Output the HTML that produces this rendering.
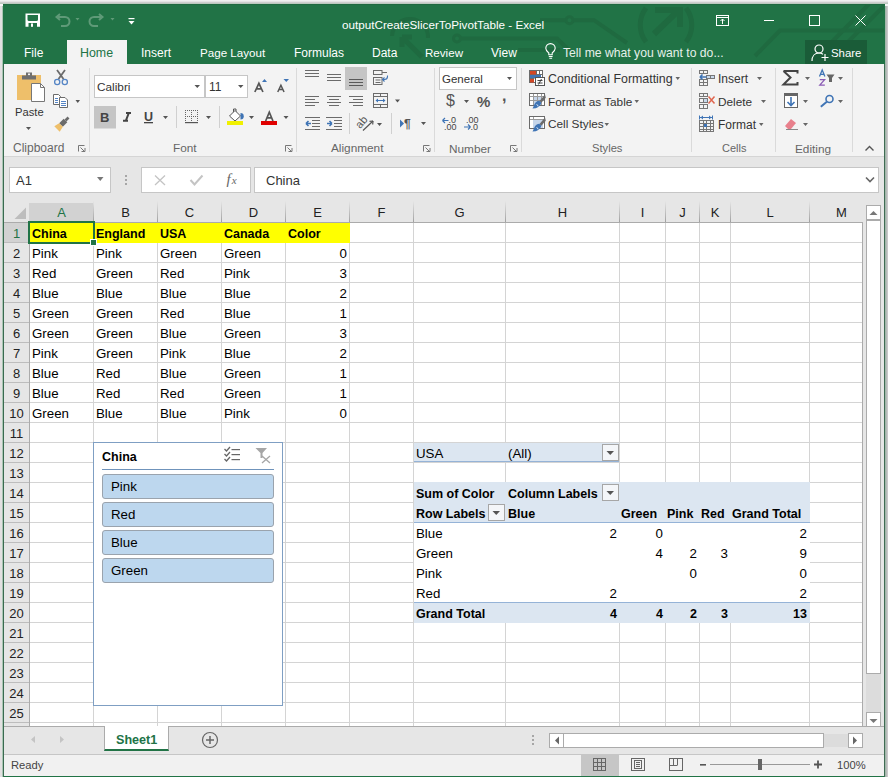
<!DOCTYPE html>
<html><head><meta charset="utf-8">
<style>
*{box-sizing:border-box;margin:0;padding:0}
html,body{width:888px;height:777px;overflow:hidden;background:#f6f6f6;font-family:"Liberation Sans",sans-serif;}
.a{position:absolute;white-space:nowrap}
#win{position:absolute;left:3px;top:4px;width:882px;height:773px;background:#217346;}
.tt{color:#fff;font-size:12px;}
.tab{color:#fff;font-size:12px;top:46px}
.rb{color:#444;font-size:12px}
.gl{color:#666;font-size:12px;top:142px}
.cell{font-size:13.3px;color:#000;position:absolute;white-space:nowrap;height:20px;line-height:20px;margin-top:1px}
.b{font-weight:bold;font-size:12.5px}
.num{text-align:right}
.ch{top:205px;height:16px;text-align:center;font-size:13px;line-height:16px}
.rh{left:4px;width:25px;height:19px;text-align:center;font-size:13px;line-height:19px;margin-top:1px}
</style></head><body>
<div id="win"></div>
<div class="a" style="left:0;top:0;width:888px;height:1px;background:#f0f0f0"></div>
<div class="a" style="left:0;top:1px;width:888px;height:1px;background:#e4e4e4"></div>
<div class="a" style="left:0;top:2px;width:888px;height:1px;background:#cecece"></div>
<div class="a" style="left:0;top:3px;width:888px;height:1px;background:#bccabf"></div>
<div class="a" style="left:3px;top:4px;width:882px;height:1px;background:#1f6940"></div>
<div class="a" style="left:885px;top:6px;width:1px;height:771px;background:#a3b8ab"></div>
<div class="a" style="left:886px;top:6px;width:1px;height:771px;background:#b6bcb9"></div>
<div class="a" style="left:887px;top:6px;width:1px;height:771px;background:#cbc8cb"></div>
<div class="a" style="left:3px;top:64px;width:1px;height:713px;background:#3a6a50"></div>
<div class="a" style="left:2px;top:6px;width:1px;height:771px;background:#aac6b4"></div>
<div class="a" style="left:0px;top:6px;width:2px;height:771px;background:#e2e0e1"></div>
<div class="a" style="left:884px;top:64px;width:1px;height:713px;background:#3f6b53"></div>
<!-- title bar pattern -->
<svg class="a" style="left:4px;top:4px" width="880" height="60">
 <g transform="translate(-4,-4)" stroke="#1f6a40" stroke-width="4" fill="none">
  <path d="M392 36 A18 18 0 0 1 428 38"/>
  <path d="M402 37 L422 57 M402 37 H412 M402 37 V47" stroke-width="5"/>
  <circle cx="457" cy="38.5" r="3.5" stroke-width="3"/>
  <path d="M461 38.5 H557 L571 52"/>
  <path d="M518 50 H560"/>
  <circle cx="569.5" cy="20.2" r="3.5" stroke-width="3"/>
  <path d="M540 20.2 H565.5 M573.5 20.2 H594 L627 43"/>
  <path d="M646 8 A28 28 0 0 0 646 42" stroke-width="5"/>
  <path d="M686 8 A28 28 0 0 1 686 42" stroke-width="5"/>
  <path d="M654 34 L679 10 M655 10 H680 V27" stroke-width="6"/>
  <path d="M755 56 L780 30.5 H884"/>
  <path d="M826 48 L869 4 M842 48 L884 6"/>
 </g>
</svg>
<div class="a tt" style="left:342px;top:18px;font-size:11.7px">outputCreateSlicerToPivotTable - Excel</div>
<!-- QAT -->
<svg class="a" style="left:0;top:0" width="140" height="34">
 <g fill="#fff">
  <path d="M25.5 13.5 h14.5 v13.3 h-14.5z M27.5 15 h10.5 v4.5 a1.5 1.5 0 0 1 -1.5 1.5 h-7.5 a1.5 1.5 0 0 1 -1.5 -1.5z M28.5 23 h8.5 v3.8 h-8.5z" fill-rule="evenodd"/><rect x="31" y="23.5" width="2" height="3.3"/>
 </g>
 <g stroke="#5f9a78" stroke-width="2" fill="none">
  <path d="M57 17 h8 a4.5 4.5 0 0 1 0 9 h-4"/>
  <path d="M60 14 l-3.5 3 l3.5 3"/>
  <path d="M102 17 h-8 a4.5 4.5 0 0 0 0 9 h4"/>
  <path d="M99 14 l3.5 3 l-3.5 3"/>
 </g>
 <g fill="#5f9a78"><path d="M75.5 18 h4 l-2 2.5z M110.5 18 h4 l-2 2.5z"/></g>
 <g fill="#fff"><rect x="128.5" y="18" width="6" height="1.2"/><path d="M128.5 21 h6 l-3 3.5z"/></g>
</svg>
<!-- window controls -->
<svg class="a" style="left:700px;top:0" width="188" height="34">
 <g stroke="#fff" stroke-width="1" fill="none">
  <rect x="16.5" y="15.5" width="12" height="10"/>
  <path d="M16.5 17.5 h12"/>
  <path d="M22.5 24 v-5 M20.5 21 l2 -2 l2 2"/>
  <path d="M64 20.5 h10"/>
  <rect x="109.5" y="15.5" width="10" height="10"/>
  <path d="M155.5 15.5 l10 10 M165.5 15.5 l-10 10"/>
 </g>
</svg>
<!-- tabs -->
<div class="a" style="left:67px;top:40px;width:60px;height:24px;background:#f3f3f3"></div>
<div class="a tab" style="left:24px">File</div>
<div class="a tab" style="left:80px;color:#217346;font-size:12.4px">Home</div>
<div class="a tab" style="left:141px">Insert</div>
<div class="a tab" style="left:200px;font-size:11.6px">Page Layout</div>
<div class="a tab" style="left:294px">Formulas</div>
<div class="a tab" style="left:372px">Data</div>
<div class="a tab" style="left:425px;font-size:11.6px">Review</div>
<div class="a tab" style="left:491px">View</div>
<svg class="a" style="left:540px;top:38px" width="22" height="24">
 <g stroke="#fff" stroke-width="1.1" fill="none">
  <path d="M8.8 16.8 v-1.8 c-2 -1.5 -3 -3 -3 -4.7 a4.7 4.7 0 0 1 9.4 0 c0 1.7 -1 3.2 -3 4.7 v1.8z"/>
  <path d="M8.8 18.5 h3.8 M9.3 20.3 h2.8"/>
 </g>
</svg>
<div class="a tab" style="left:563px;color:#e6f0ea;font-size:12.2px">Tell me what you want to do...</div>
<div class="a" style="left:805px;top:40px;width:62px;height:24px;background:#1a5c38"></div>
<svg class="a" style="left:808px;top:40px" width="24" height="24">
 <g stroke="#fff" stroke-width="1.2" fill="none">
  <circle cx="11" cy="9" r="4"/>
  <path d="M4 21 c0 -5 3 -8 7 -8 c2 0 3 0.5 4 1.2"/>
  <path d="M17 14 v7 M13.5 17.5 h7"/>
 </g>
</svg>
<div class="a tab" style="left:831px;font-size:11.4px;top:47px">Share</div>
<!-- ribbon -->
<div class="a" style="left:4px;top:64px;width:880px;height:93px;background:#f3f3f3;border-bottom:1px solid #d5d5d5"></div>
<!-- formula bar zone -->
<div class="a" style="left:4px;top:157px;width:880px;height:569px;background:#e6e6e6"></div>

<!-- ===== Clipboard group ===== -->
<svg class="a" style="left:0;top:64px" width="300" height="93">
 <g transform="translate(0,-64)">
  <!-- paste -->
  <rect x="17" y="75" width="24" height="25" fill="#eebf6a"/>
  <path d="M22 79.5 v-4 h4 v-3 h6 v3 h4 v4z" fill="#6f6f6f"/>
  <rect x="28" y="73.5" width="2" height="1.6" fill="#f3f3f3"/>
  <path d="M31.5 83.5 h9 l4 4 v14 h-13z" fill="#fff" stroke="#777" stroke-width="1"/>
  <path d="M40.5 83.5 v4 h4" fill="none" stroke="#777" stroke-width="1"/>
  <path d="M26 127 h5 l-2.5 3z" fill="#555"/>
  <!-- cut -->
  <path d="M57 70 L63.5 79 M65 70 L58.5 79" stroke="#6b6b6b" stroke-width="1.8" fill="none"/>
  <circle cx="57.2" cy="82" r="2.6" fill="none" stroke="#5585c5" stroke-width="1.3"/>
  <circle cx="64.8" cy="82" r="2.6" fill="none" stroke="#5585c5" stroke-width="1.3"/>
  <!-- copy -->
  <path d="M53.5 94.5 h5 l2 2 v8 h-7z" fill="#fff" stroke="#6b6b6b"/>
  <path d="M59.5 97.5 h5.5 l2.5 2.5 v7.5 h-8z" fill="#fff" stroke="#6b6b6b"/>
  <path d="M55 98.5 h3 M55 100.5 h3 M55 102.5 h3" stroke="#5585c5"/>
  <path d="M61 101.5 h5 M61 103.5 h5 M61 105.5 h5" stroke="#5585c5"/>
  <path d="M75.5 100 h4.5 l-2.25 3z" fill="#555"/>
  <!-- format painter -->
  <path d="M69.42 118.42 L67.58 116.58 L64.58 119.58 L66.42 121.42z" fill="#6b6b6b"/>
  <path d="M67.34 122.34 L63.66 118.66 L59.16 123.16 L62.84 126.84z" fill="#6b6b6b"/>
  <path d="M62.84 126.84 L59.16 123.16 L54.31 126.31 L59.69 131.69z" fill="#eebf6a"/>
  <!-- launcher -->
  <path d="M78.5 151.5 v-6 h6" fill="none" stroke="#777"/>
  <path d="M80.5 147.5 l4 4 M81.5 151.5 h3.5 v-3.5" fill="none" stroke="#777"/>
  <line x1="89.5" y1="68" x2="89.5" y2="152" stroke="#dadada"/>
  <!-- font boxes -->
  <rect x="94.5" y="75.5" width="110" height="22" fill="#fff" stroke="#c6c6c6"/>
  <rect x="205.5" y="75.5" width="42" height="22" fill="#fff" stroke="#c6c6c6"/>
  <path d="M194.5 85 h5.5 l-2.75 3z M238 85 h5.5 l-2.75 3z" fill="#555"/>
  <!-- grow/shrink -->
  <path d="M262 82 l2.5 -3 l2.5 3z M283.5 79 h5.5 l-2.75 3z" fill="#3f74b5"/>
  <!-- bold pressed -->
  <rect x="94" y="106" width="22" height="22.5" fill="#c5c5c5"/>
  <path d="M163 116 h5 l-2.5 3z M206 116 h5 l-2.5 3z M249 116 h5 l-2.5 3z M283.5 116 h5 l-2.5 3z" fill="#555"/>
  <line x1="176.5" y1="106" x2="176.5" y2="128" stroke="#d0d0d0"/>
  <line x1="219.5" y1="106" x2="219.5" y2="128" stroke="#d0d0d0"/>
  <!-- underline -->
  <rect x="144" y="122" width="9" height="1.3" fill="#444"/>
  <!-- borders icon -->
  <g fill="#666"><rect x="185" y="110" width="1" height="1"/><rect x="185" y="116" width="1" height="1"/><rect x="187" y="110" width="1" height="1"/><rect x="187" y="116" width="1" height="1"/><rect x="189" y="110" width="1" height="1"/><rect x="189" y="116" width="1" height="1"/><rect x="191" y="110" width="1" height="1"/><rect x="191" y="116" width="1" height="1"/><rect x="193" y="110" width="1" height="1"/><rect x="193" y="116" width="1" height="1"/><rect x="195" y="110" width="1" height="1"/><rect x="195" y="116" width="1" height="1"/><rect x="197" y="110" width="1" height="1"/><rect x="197" y="116" width="1" height="1"/><rect x="185" y="110" width="1" height="1"/><rect x="191" y="110" width="1" height="1"/><rect x="197" y="110" width="1" height="1"/><rect x="185" y="112" width="1" height="1"/><rect x="191" y="112" width="1" height="1"/><rect x="197" y="112" width="1" height="1"/><rect x="185" y="114" width="1" height="1"/><rect x="191" y="114" width="1" height="1"/><rect x="197" y="114" width="1" height="1"/><rect x="185" y="116" width="1" height="1"/><rect x="191" y="116" width="1" height="1"/><rect x="197" y="116" width="1" height="1"/><rect x="185" y="118" width="1" height="1"/><rect x="191" y="118" width="1" height="1"/><rect x="197" y="118" width="1" height="1"/><rect x="185" y="120" width="1" height="1"/><rect x="191" y="120" width="1" height="1"/><rect x="197" y="120" width="1" height="1"/></g>
  <rect x="185" y="122" width="13" height="1.2" fill="#555"/>
  <!-- fill colour -->
  <path d="M233.5 114 v-5 h2.5 v5" fill="none" stroke="#555"/><path d="M229.5 116 l5.5 -5.5 l5.5 5.5 l-5.5 5z" fill="#fff" stroke="#555"/>
  
  <path d="M240.5 113 a3 3 0 0 1 0 6.5z" fill="#3f74b5"/>
  <rect x="227" y="121" width="16" height="4" fill="#f0f000"/>
  <!-- font colour -->
  <rect x="261" y="121" width="16" height="4" fill="#e00000"/>
  <!-- launcher -->
  <path d="M285.5 151.5 v-6 h6" fill="none" stroke="#777"/>
  <path d="M287.5 147.5 l4 4 M288.5 151.5 h3.5 v-3.5" fill="none" stroke="#777"/>
  <line x1="296.5" y1="68" x2="296.5" y2="152" stroke="#dadada"/>
 </g>
</svg>
<div class="a rb" style="left:15px;top:106px;font-size:11.2px;color:#333">Paste</div>
<div class="a rb" style="left:13px;top:141px;font-size:12px;color:#666">Clipboard</div>
<div class="a rb" style="left:97px;top:80px;font-size:11.8px;color:#333">Calibri</div>
<div class="a rb" style="left:209px;top:80px;font-size:12px;color:#333">11</div>


<div class="a rb" style="left:100px;top:110px;font-size:13px;color:#444;font-weight:bold">B</div>
<svg class="a" style="left:120px;top:108px" width="14" height="18"><path d="M6 5 h5 M3 12.8 h5 M8.8 5 l-3 7.8" fill="none" stroke="#444" stroke-width="2"/></svg>
<div class="a rb" style="left:144px;top:110px;font-size:12.5px;color:#444;font-weight:bold">U</div>

<div class="a rb" style="left:173px;top:141px;font-size:11.8px;color:#666">Font</div>
<svg class="a" style="left:0;top:0" width="300" height="160"><path d="M254.85 92 L258.9 83.35 L262.95 92 M256.646 88.96000000000001 H261.154" fill="none" stroke="#555" stroke-width="1.7"/><path d="M277.75 92 L280.9 85.25 L284.05 92 M279.106 89.6 H282.694" fill="none" stroke="#555" stroke-width="1.5"/><path d="M265.65000000000003 121 L269.3 112.14999999999999 L272.95 121 M267.23 117.896 H271.37" fill="none" stroke="#555" stroke-width="1.7"/></svg>

<!-- ===== Alignment / Number / Styles / Cells / Editing ===== -->
<svg class="a" style="left:296px;top:64px" width="592" height="93">
 <g transform="translate(-296,-64)">
  <g fill="#6b6b6b">
   <rect x="305" y="70" width="14" height="1"/><rect x="305" y="73" width="14" height="1"/><rect x="305" y="76" width="14" height="1"/>
   <rect x="327" y="74" width="14" height="1"/><rect x="327" y="77" width="14" height="1"/><rect x="327" y="80" width="14" height="1"/>
  </g>
  <rect x="345" y="67" width="22" height="23" fill="#c5c5c5"/>
  <g fill="#5a5a5a">
   <rect x="349" y="79" width="14" height="1"/><rect x="349" y="82" width="14" height="1"/><rect x="349" y="85" width="14" height="1"/>
  </g>
  <g fill="none" stroke="#6b6b6b">
   <rect x="373.5" y="70.5" width="8.5" height="4"/><path d="M382 72.5 h5"/>
   <rect x="373.5" y="77.5" width="8.5" height="7"/><path d="M375.5 80 h5 M375.5 82.5 h5"/>
  </g>
  <path d="M387.5 75.5 v1 a3 3 0 0 1 -3 3 h-2 M384.5 77.5 l-2 2 l2 2" fill="none" stroke="#3f74b5" stroke-width="1.1"/>
  <g fill="#6b6b6b">
   <rect x="305" y="96" width="14" height="1"/><rect x="305" y="99" width="10" height="1"/><rect x="305" y="102" width="14" height="1"/><rect x="305" y="105" width="10" height="1"/>
   <rect x="327" y="96" width="14" height="1"/><rect x="329" y="99" width="10" height="1"/><rect x="327" y="102" width="14" height="1"/><rect x="329" y="105" width="10" height="1"/>
   <rect x="349" y="96" width="14" height="1"/><rect x="353" y="99" width="10" height="1"/><rect x="349" y="102" width="14" height="1"/><rect x="353" y="105" width="10" height="1"/>
  </g>
  <g fill="none" stroke="#6b6b6b">
   <rect x="373.5" y="93.5" width="14" height="14"/>
   <path d="M373.5 96.5 h14 M373.5 104.5 h14 M380.5 93.5 v3 M380.5 104.5 v3"/>
  </g>
  <path d="M376 100.5 h9" stroke="#3f74b5"/>
  <path d="M375.5 100.5 l2.5 -2 v4z M385.5 100.5 l-2.5 -2 v4z" fill="#3f74b5"/>
  <path d="M395 99.5 h5 l-2.5 3z M377 123 h5 l-2.5 3z M421 122 h5 l-2.5 3z" fill="#555"/>
  <g fill="#6b6b6b">
   <rect x="305" y="117" width="15" height="1"/><rect x="312" y="120" width="8" height="1"/><rect x="312" y="123" width="8" height="1"/><rect x="312" y="126" width="8" height="1"/><rect x="305" y="129" width="15" height="1"/>
   <rect x="326" y="117" width="16" height="1"/><rect x="334" y="120" width="8" height="1"/><rect x="334" y="123" width="8" height="1"/><rect x="334" y="126" width="8" height="1"/><rect x="326" y="129" width="16" height="1"/>
  </g>
  <path d="M306 123.5 h5 M306 123.5 l2.5 -2.5 M306 123.5 l2.5 2.5" fill="none" stroke="#3f74b5" stroke-width="1.6"/>
  <path d="M327 123.5 h5 M332 123.5 l-2.5 -2.5 M332 123.5 l-2.5 2.5" fill="none" stroke="#3f74b5" stroke-width="1.6"/>
<line x1="349.5" y1="113" x2="349.5" y2="134" stroke="#d0d0d0"/>
  <!-- orientation -->
  <path d="M363 130.5 l10 -9.5" stroke="#555" stroke-width="1.2"/>
  <path d="M373 121 l-3.5 0.3 M373 121 l-0.3 3.5" stroke="#555" stroke-width="1.2"/>
  <line x1="391.5" y1="113" x2="391.5" y2="134" stroke="#d0d0d0"/>
  <!-- rtl -->
  <path d="M400 119.5 l4 4 l-4 4z" fill="#3f74b5"/>
  <!-- launchers & separators -->
  <path d="M423.5 151.5 v-6 h6 M425.5 147.5 l4 4 M426.5 151.5 h3.5 v-3.5" fill="none" stroke="#777"/>
  <line x1="434.5" y1="68" x2="434.5" y2="152" stroke="#dadada"/>
  <!-- number -->
  <rect x="439.5" y="67.5" width="77" height="22" fill="#fff" stroke="#c6c6c6"/>
  <path d="M507 77 h5 l-2.5 3z M464 100 h5 l-2.5 3z" fill="#555"/>
  <path d="M442.5 120.5 h6 M442.5 120.5 l2.5 -2.5 M442.5 120.5 l2.5 2.5" fill="none" stroke="#3f74b5" stroke-width="1.2"/>
  <path d="M464 127 h6.5 M470.5 127 l-2.5 -2.5 M470.5 127 l-2.5 2.5" fill="none" stroke="#3f74b5" stroke-width="1.2"/>
  <path d="M510.5 151.5 v-6 h6 M512.5 147.5 l4 4 M513.5 151.5 h3.5 v-3.5" fill="none" stroke="#777"/>
  <line x1="521.5" y1="68" x2="521.5" y2="152" stroke="#dadada"/>
  <!-- styles icons -->
  <g>
   <rect x="529.5" y="70.5" width="13" height="12" fill="#fff" stroke="#6b6b6b"/>
   <path d="M536.5 70.5 v4.5 M539.5 70.5 v4.5 M529.5 74.5 h13 M529.5 78.5 h5" stroke="#6b6b6b" fill="none"/>
   <rect x="530" y="71" width="6" height="3.5" fill="#d24726"/>
   <rect x="530" y="75" width="11" height="3" fill="#3f74b5"/>
   <rect x="530" y="79" width="4" height="3.5" fill="#d24726"/>
   <rect x="535.5" y="77.5" width="9" height="8" fill="#fff" stroke="#555"/>
   <path d="M537.5 80.5 h5 M537.5 83 h5 M541.5 79 l-3 5.5" stroke="#333" stroke-width="0.9"/>
  </g>
  <g>
   <rect x="529.5" y="93.5" width="15" height="12" fill="#fff" stroke="#6b6b6b"/>
   <rect x="533" y="97" width="9" height="8" fill="#c5d5ea"/>
   <path d="M533.5 93.5 v12 M537.5 93.5 v12 M541.5 93.5 v12 M529.5 96.5 h15 M529.5 100.5 h15" stroke="#9a9a9a" fill="none"/>
   <rect x="529.5" y="93.5" width="15" height="12" fill="none" stroke="#6b6b6b"/>
   <path d="M545 94.5 l-5.5 6.5 l1.8 1.8 l4.5 -5z" fill="#6b6b6b"/>
   <path d="M539.3 100.8 l2 2 c-0.5 2.5 -2.5 4.5 -5.5 5.5 l-3.3 0.2 c1 -1.5 1.5 -3.8 2.5 -5.2 c1 -1.5 2.5 -2.3 4.3 -2.5z" fill="#3f74b5"/>
   <path d="M536.5 104.5 q1.5 0.3 1.5 1.8" fill="none" stroke="#fff" stroke-width="0.8"/>
  </g>
  <g>
   <rect x="529.5" y="116.5" width="15" height="12" fill="#fff" stroke="#6b6b6b"/>
   <rect x="533" y="120" width="10" height="8" fill="#c5d5ea"/>
   <path d="M529.5 119.5 h15 M533.5 116.5 v3" stroke="#9a9a9a" fill="none"/>
   <rect x="529.5" y="116.5" width="15" height="12" fill="none" stroke="#6b6b6b"/>
   <path d="M545 117.5 l-5.5 6.5 l1.8 1.8 l4.5 -5z" fill="#6b6b6b"/>
   <path d="M539.3 123.8 l2 2 c-0.5 2.5 -2.5 4.5 -5.5 5.5 l-3.3 0.2 c1 -1.5 1.5 -3.8 2.5 -5.2 c1 -1.5 2.5 -2.3 4.3 -2.5z" fill="#3f74b5"/>
   <path d="M536.5 127.5 q1.5 0.3 1.5 1.8" fill="none" stroke="#fff" stroke-width="0.8"/>
  </g>
  <path d="M675.5 77 h4.5 l-2.25 3z M634.5 100 h4.5 l-2.25 3z M604.5 123 h4.5 l-2.25 3z" fill="#666"/>
  <line x1="691.5" y1="68" x2="691.5" y2="152" stroke="#dadada"/>
  <!-- cells icons -->
  <g fill="none" stroke="#777">
   <rect x="699.5" y="70.5" width="8" height="3"/><path d="M703.5 70.5 v3"/>
   <rect x="699.5" y="79.5" width="8" height="6"/><path d="M703.5 79.5 v6 M699.5 82.5 h8"/>
   <rect x="706.5" y="75.5" width="8" height="3" fill="#c9d9ec"/><path d="M710.5 75.5 v3"/>
   <rect x="699.5" y="93.5" width="8" height="3"/><path d="M703.5 93.5 v3"/>
   <rect x="699.5" y="98.5" width="8" height="4"/><path d="M703.5 98.5 v4"/>
   <rect x="699.5" y="104.5" width="8" height="4"/><path d="M703.5 104.5 v4"/>
   <rect x="699.5" y="120.5" width="14" height="11"/>
   <path d="M703.5 120.5 v11 M706.5 120.5 v11 M710.5 120.5 v11 M699.5 123.5 h14 M699.5 126.5 h14 M699.5 129.5 h14"/>
  </g>
  <rect x="704" y="99" width="3" height="3" fill="#c9d9ec"/>
  <path d="M700 77 h6.5 M700 77 l2.5 -2.5 M700 77 l2.5 2.5" fill="none" stroke="#3f74b5" stroke-width="1.6"/>
  <path d="M708.5 96.5 l6 7 M714.5 96.5 l-6 7" stroke="#e0664f" stroke-width="1.5"/>
  <path d="M700 117.5 h12.5 M699.5 115.5 v4 M712.5 115.5 v4" stroke="#3f74b5" fill="none"/>
  <path d="M700.5 117.5 l2.5 -2 v4z M711.5 117.5 l-2.5 -2 v4z" fill="#3f74b5"/>
  <rect x="704" y="124" width="3" height="3" fill="#3f74b5"/>
  <path d="M757 77 h5 l-2.5 3z M761 100 h5 l-2.5 3z M759 123 h4.5 l-2.25 3z" fill="#666"/>
  <line x1="775.5" y1="68" x2="775.5" y2="152" stroke="#dadada"/>
  <!-- editing -->
  <path d="M783.5 71 h14 v2.5 M783.5 71 l7 6.5 l-7 7 h14 v-2.5" fill="none" stroke="#444" stroke-width="2"/>
  <path d="M805 77 h5 l-2.5 3z M838 77 h5 l-2.5 3z M803 100 h5 l-2.5 3z M838 100 h5 l-2.5 3z M803 123 h5 l-2.5 3z" fill="#666"/>
  <rect x="784.5" y="93.5" width="13" height="14" fill="#fff" stroke="#666"/>
  <rect x="784" y="93" width="14" height="3" fill="#666"/>
  <path d="M791 97 v8 M787.5 102 l3.5 3.5 l3.5 -3.5" fill="none" stroke="#3f74b5" stroke-width="1.6"/>
  <path d="M826.5 74.5 h8 l-2.5 3.5 v4 h-3 v-4z" fill="#666"/>
  <circle cx="829.5" cy="99" r="3.5" fill="none" stroke="#3f74b5" stroke-width="1.6"/>
  <path d="M826.8 101.8 l-6 5" stroke="#3f74b5" stroke-width="2"/>
  <path d="M785 126 l6 -7 l5 4 l-5 6 h-3z" fill="#e8808c"/>
  <path d="M786 129.5 h12" stroke="#888"/>
  <path d="M865.5 150.5 l4 -4 l4 4" fill="none" stroke="#555" stroke-width="1.4"/>
  <line x1="852.5" y1="68" x2="852.5" y2="152" stroke="#dadada"/>
 </g>
</svg>
<div class="a rb" style="left:355px;top:116px;font-size:11px;color:#555;transform:rotate(-50deg);transform-origin:50% 50%">ab</div>
<div class="a rb" style="left:404px;top:117px;font-size:12px;color:#555;font-weight:bold">&para;</div>
<div class="a rb" style="left:331px;top:141px;font-size:11.8px;color:#666">Alignment</div>
<div class="a rb" style="left:442px;top:73px;font-size:11.5px;color:#333">General</div>
<div class="a rb" style="left:446px;top:92px;font-size:16px;color:#555">$</div>
<div class="a rb" style="left:477px;top:93px;font-size:15px;color:#555;font-weight:bold">%</div>
<div class="a rb" style="left:502px;top:87px;font-size:16px;color:#555;font-weight:bold">,</div>


<div class="a rb" style="left:449px;top:142px;font-size:11.8px;color:#666">Number</div>
<svg class="a" style="left:0;top:0" width="520" height="140"><g font-family="Liberation Sans" font-size="9px" fill="#444">
<text x="448.5" y="122.5">.0</text><text x="444" y="129.5">.00</text>
<text x="466" y="122.5">.00</text><text x="470.5" y="129.5">.0</text></g></svg>
<div class="a rb" style="left:548px;top:72px;font-size:12.4px;color:#333">Conditional Formatting</div>
<div class="a rb" style="left:548px;top:95px;font-size:11.8px;color:#333">Format as Table</div>
<div class="a rb" style="left:548px;top:117px;font-size:11.8px;color:#333">Cell Styles</div>
<div class="a rb" style="left:592px;top:142px;font-size:11.2px;color:#666">Styles</div>
<div class="a rb" style="left:718px;top:72px;font-size:12px;color:#333">Insert</div>
<div class="a rb" style="left:718px;top:95px;font-size:11.8px;color:#333">Delete</div>
<div class="a rb" style="left:718px;top:118px;font-size:12px;color:#333">Format</div>
<div class="a rb" style="left:722px;top:142px;font-size:11px;color:#666">Cells</div>
<div class="a rb" style="left:795px;top:142px;font-size:11.8px;color:#666">Editing</div>
<svg class="a" style="left:815px;top:66px" width="24" height="22">
 <path d="M4.5 10.5 L7.2 4 L9.9 10.5 M5.6 8.3 H8.8" fill="none" stroke="#3f74b5" stroke-width="1.3"/>
 <path d="M4.8 13.6 H9.6 L4.8 19.2 H9.8" fill="none" stroke="#8a5bb5" stroke-width="1.3"/>
</svg>

<!-- ===== formula bar ===== -->
<div class="a" style="left:9px;top:167px;width:102px;height:26px;background:#fff;border:1px solid #c6c6c6"></div>
<div class="a" style="left:16px;top:173px;font-size:13px;color:#333">A1</div>
<div class="a" style="left:141px;top:167px;width:110px;height:26px;background:#fff;border:1px solid #c6c6c6"></div>
<div class="a" style="left:254px;top:167px;width:625px;height:26px;background:#fff;border:1px solid #c6c6c6"></div>
<div class="a" style="left:266px;top:173px;font-size:13px;color:#333">China</div>
<svg class="a" style="left:0;top:160px" width="888" height="40">
 <g transform="translate(0,-160)">
  <path d="M97 177 h6.5 l-3.25 4z" fill="#777"/>
  <rect x="125" y="175" width="2" height="2" fill="#a6a6a6"/><rect x="125" y="179" width="2" height="2" fill="#a6a6a6"/><rect x="125" y="183" width="2" height="2" fill="#a6a6a6"/>
  <path d="M155 175.5 l10 9.5 M165 175.5 l-10 9.5" stroke="#c4c4c4" stroke-width="1.3"/>
  <path d="M190.5 180 l4 4.5 l8 -9" fill="none" stroke="#c4c4c4" stroke-width="2"/>
  <path d="M866 177.5 l4 4 l4 -4" fill="none" stroke="#666" stroke-width="1.6"/>
 </g>
</svg>
<svg class="a" style="left:220px;top:170px" width="24" height="20"><text x="6.5" y="13.5" font-family="Liberation Serif" font-style="italic" font-size="15px" fill="#666">f</text><text x="11.8" y="13.8" font-family="Liberation Serif" font-style="italic" font-size="11px" fill="#666">x</text></svg>
<!-- ===== headers & grid ===== -->
<div class="a" style="left:30px;top:223px;width:832px;height:503px;background:#fff"></div>
<div class="a" style="left:29px;top:203px;width:64px;height:19px;background:#d2d2d2"></div>
<div class="a" style="left:4px;top:223px;width:25px;height:19px;background:#d2d2d2"></div>
<svg class="a" style="left:0;top:0" width="888" height="777">
 <defs><linearGradient id="sepg" x1="0" y1="0" x2="0" y2="1"><stop offset="0" stop-color="#e6e6e6"/><stop offset="1" stop-color="#a0a0a0"/></linearGradient></defs>
 <path d="M14.5 219 L26 207.5 V219z" fill="#bdbdbd"/>
 <rect x="93" y="201" width="1" height="21" fill="url(#sepg)"/>
<rect x="157" y="201" width="1" height="21" fill="url(#sepg)"/>
<rect x="221" y="201" width="1" height="21" fill="url(#sepg)"/>
<rect x="285" y="201" width="1" height="21" fill="url(#sepg)"/>
<rect x="349" y="201" width="1" height="21" fill="url(#sepg)"/>
<rect x="413" y="201" width="1" height="21" fill="url(#sepg)"/>
<rect x="505" y="201" width="1" height="21" fill="url(#sepg)"/>
<rect x="619" y="201" width="1" height="21" fill="url(#sepg)"/>
<rect x="665" y="201" width="1" height="21" fill="url(#sepg)"/>
<rect x="699" y="201" width="1" height="21" fill="url(#sepg)"/>
<rect x="730" y="201" width="1" height="21" fill="url(#sepg)"/>
<rect x="809" y="201" width="1" height="21" fill="url(#sepg)"/>
<line x1="4" y1="242.5" x2="29" y2="242.5" stroke="#bdbdbd"/>
<line x1="4" y1="262.5" x2="29" y2="262.5" stroke="#bdbdbd"/>
<line x1="4" y1="282.5" x2="29" y2="282.5" stroke="#bdbdbd"/>
<line x1="4" y1="302.5" x2="29" y2="302.5" stroke="#bdbdbd"/>
<line x1="4" y1="322.5" x2="29" y2="322.5" stroke="#bdbdbd"/>
<line x1="4" y1="342.5" x2="29" y2="342.5" stroke="#bdbdbd"/>
<line x1="4" y1="362.5" x2="29" y2="362.5" stroke="#bdbdbd"/>
<line x1="4" y1="382.5" x2="29" y2="382.5" stroke="#bdbdbd"/>
<line x1="4" y1="402.5" x2="29" y2="402.5" stroke="#bdbdbd"/>
<line x1="4" y1="422.5" x2="29" y2="422.5" stroke="#bdbdbd"/>
<line x1="4" y1="442.5" x2="29" y2="442.5" stroke="#bdbdbd"/>
<line x1="4" y1="462.5" x2="29" y2="462.5" stroke="#bdbdbd"/>
<line x1="4" y1="482.5" x2="29" y2="482.5" stroke="#bdbdbd"/>
<line x1="4" y1="502.5" x2="29" y2="502.5" stroke="#bdbdbd"/>
<line x1="4" y1="522.5" x2="29" y2="522.5" stroke="#bdbdbd"/>
<line x1="4" y1="542.5" x2="29" y2="542.5" stroke="#bdbdbd"/>
<line x1="4" y1="562.5" x2="29" y2="562.5" stroke="#bdbdbd"/>
<line x1="4" y1="582.5" x2="29" y2="582.5" stroke="#bdbdbd"/>
<line x1="4" y1="602.5" x2="29" y2="602.5" stroke="#bdbdbd"/>
<line x1="4" y1="622.5" x2="29" y2="622.5" stroke="#bdbdbd"/>
<line x1="4" y1="642.5" x2="29" y2="642.5" stroke="#bdbdbd"/>
<line x1="4" y1="662.5" x2="29" y2="662.5" stroke="#bdbdbd"/>
<line x1="4" y1="682.5" x2="29" y2="682.5" stroke="#bdbdbd"/>
<line x1="4" y1="702.5" x2="29" y2="702.5" stroke="#bdbdbd"/>
<line x1="4" y1="722.5" x2="29" y2="722.5" stroke="#bdbdbd"/>
 <line x1="4" y1="222.5" x2="862" y2="222.5" stroke="#ababab"/>
 <line x1="29.5" y1="223" x2="29.5" y2="726" stroke="#ababab"/>
 <g stroke="#d4d4d4">
 <line x1="93.5" y1="223" x2="93.5" y2="726"/>
<line x1="157.5" y1="223" x2="157.5" y2="726"/>
<line x1="221.5" y1="223" x2="221.5" y2="726"/>
<line x1="285.5" y1="223" x2="285.5" y2="726"/>
<line x1="349.5" y1="223" x2="349.5" y2="726"/>
<line x1="413.5" y1="223" x2="413.5" y2="726"/>
<line x1="505.5" y1="223" x2="505.5" y2="726"/>
<line x1="619.5" y1="223" x2="619.5" y2="726"/>
<line x1="665.5" y1="223" x2="665.5" y2="726"/>
<line x1="699.5" y1="223" x2="699.5" y2="726"/>
<line x1="730.5" y1="223" x2="730.5" y2="726"/>
<line x1="809.5" y1="223" x2="809.5" y2="726"/>
<line x1="30" y1="242.5" x2="862" y2="242.5"/>
<line x1="30" y1="262.5" x2="862" y2="262.5"/>
<line x1="30" y1="282.5" x2="862" y2="282.5"/>
<line x1="30" y1="302.5" x2="862" y2="302.5"/>
<line x1="30" y1="322.5" x2="862" y2="322.5"/>
<line x1="30" y1="342.5" x2="862" y2="342.5"/>
<line x1="30" y1="362.5" x2="862" y2="362.5"/>
<line x1="30" y1="382.5" x2="862" y2="382.5"/>
<line x1="30" y1="402.5" x2="862" y2="402.5"/>
<line x1="30" y1="422.5" x2="862" y2="422.5"/>
<line x1="30" y1="442.5" x2="862" y2="442.5"/>
<line x1="30" y1="462.5" x2="862" y2="462.5"/>
<line x1="30" y1="482.5" x2="862" y2="482.5"/>
<line x1="30" y1="502.5" x2="862" y2="502.5"/>
<line x1="30" y1="522.5" x2="862" y2="522.5"/>
<line x1="30" y1="542.5" x2="862" y2="542.5"/>
<line x1="30" y1="562.5" x2="862" y2="562.5"/>
<line x1="30" y1="582.5" x2="862" y2="582.5"/>
<line x1="30" y1="602.5" x2="862" y2="602.5"/>
<line x1="30" y1="622.5" x2="862" y2="622.5"/>
<line x1="30" y1="642.5" x2="862" y2="642.5"/>
<line x1="30" y1="662.5" x2="862" y2="662.5"/>
<line x1="30" y1="682.5" x2="862" y2="682.5"/>
<line x1="30" y1="702.5" x2="862" y2="702.5"/>
<line x1="30" y1="722.5" x2="862" y2="722.5"/>
 </g>
 <line x1="862.5" y1="222" x2="862.5" y2="726" stroke="#ababab"/>
</svg>
<div class="a ch" style="left:30px;width:63px;color:#217346">A</div><div class="a ch" style="left:94px;width:63px;color:#222">B</div><div class="a ch" style="left:158px;width:63px;color:#222">C</div><div class="a ch" style="left:222px;width:63px;color:#222">D</div><div class="a ch" style="left:286px;width:63px;color:#222">E</div><div class="a ch" style="left:350px;width:63px;color:#222">F</div><div class="a ch" style="left:414px;width:91px;color:#222">G</div><div class="a ch" style="left:506px;width:113px;color:#222">H</div><div class="a ch" style="left:620px;width:45px;color:#222">I</div><div class="a ch" style="left:666px;width:33px;color:#222">J</div><div class="a ch" style="left:700px;width:30px;color:#222">K</div><div class="a ch" style="left:731px;width:78px;color:#222">L</div><div class="a ch" style="left:810px;width:63px;color:#222">M</div>
<div class="a rh" style="top:223px;color:#217346">1</div><div class="a rh" style="top:243px;color:#222">2</div><div class="a rh" style="top:263px;color:#222">3</div><div class="a rh" style="top:283px;color:#222">4</div><div class="a rh" style="top:303px;color:#222">5</div><div class="a rh" style="top:323px;color:#222">6</div><div class="a rh" style="top:343px;color:#222">7</div><div class="a rh" style="top:363px;color:#222">8</div><div class="a rh" style="top:383px;color:#222">9</div><div class="a rh" style="top:403px;color:#222">10</div><div class="a rh" style="top:423px;color:#222">11</div><div class="a rh" style="top:443px;color:#222">12</div><div class="a rh" style="top:463px;color:#222">13</div><div class="a rh" style="top:483px;color:#222">14</div><div class="a rh" style="top:503px;color:#222">15</div><div class="a rh" style="top:523px;color:#222">16</div><div class="a rh" style="top:543px;color:#222">17</div><div class="a rh" style="top:563px;color:#222">18</div><div class="a rh" style="top:583px;color:#222">19</div><div class="a rh" style="top:603px;color:#222">20</div><div class="a rh" style="top:623px;color:#222">21</div><div class="a rh" style="top:643px;color:#222">22</div><div class="a rh" style="top:663px;color:#222">23</div><div class="a rh" style="top:683px;color:#222">24</div><div class="a rh" style="top:703px;color:#222">25</div>
<!-- ===== vertical scrollbar ===== -->
<div class="a" style="left:866px;top:205px;width:15px;height:15px;background:#fff;border:1px solid #ababab"></div>
<div class="a" style="left:866px;top:220px;width:15px;height:454px;background:#fff;border:1px solid #ababab"></div>
<div class="a" style="left:866px;top:674px;width:15px;height:38px;background:#dcdcdc"></div>
<div class="a" style="left:866px;top:712px;width:15px;height:15px;background:#fff;border:1px solid #ababab"></div>
<svg class="a" style="left:866px;top:205px" width="15" height="522">
 <path d="M3.5 10 h8 l-4 -4z" fill="#777"/>
 <path d="M3.5 514 h8 l-4 4z" fill="#777"/>
</svg>
<!-- ===== sheet tab bar ===== -->
<div class="a" style="left:4px;top:726px;width:880px;height:28px;background:#e6e6e6;border-top:1px solid #ababab"></div>
<div class="a" style="left:104px;top:726px;width:65px;height:25px;background:#fff;border-left:1px solid #ababab;border-right:1px solid #ababab;border-bottom:2px solid #217346"></div>
<div class="a" style="left:116px;top:733px;font-size:12.6px;font-weight:bold;color:#217346">Sheet1</div>
<svg class="a" style="left:0;top:726px" width="888" height="28">
 <path d="M35 10 v7 l-4 -3.5z M60 10 v7 l4 -3.5z" fill="#c4c4c4"/>
 <circle cx="210" cy="14" r="7.5" fill="none" stroke="#666" stroke-width="1.2"/>
 <path d="M206 14 h8 M210 10 v8" stroke="#666" stroke-width="1.5"/>
 <rect x="532" y="9" width="2" height="2" fill="#a6a6a6"/><rect x="532" y="13" width="2" height="2" fill="#a6a6a6"/><rect x="532" y="17" width="2" height="2" fill="#a6a6a6"/>
</svg>
<div class="a" style="left:549px;top:733px;width:15px;height:15px;background:#fff;border:1px solid #ababab"></div>
<div class="a" style="left:563px;top:733px;width:261px;height:15px;background:#fff;border:1px solid #ababab"></div>
<div class="a" style="left:824px;top:734px;width:24px;height:13px;background:#dcdcdc"></div>
<div class="a" style="left:848px;top:733px;width:15px;height:15px;background:#fff;border:1px solid #ababab"></div>
<svg class="a" style="left:549px;top:733px" width="314" height="15">
 <path d="M10 3.5 v8 l-4 -4z" fill="#666"/>
 <path d="M304 3.5 v8 l4 -4z" fill="#666"/>
</svg>
<!-- ===== status bar ===== -->
<div class="a" style="left:4px;top:754px;width:880px;height:22px;background:#f1f1f1;border-top:1px solid #c6c6c6"></div>
<div class="a" style="left:11px;top:759px;font-size:11.2px;color:#444">Ready</div>
<div class="a" style="left:581px;top:755px;width:38px;height:21px;background:#c6c6c6"></div>
<svg class="a" style="left:0;top:754px" width="888" height="23">
 <g fill="none" stroke="#666">
  <rect x="593.5" y="4.5" width="12" height="12"/>
  <path d="M597.5 4.5 v12 M601.5 4.5 v12 M593.5 8.5 h12 M593.5 12.5 h12"/>
  <rect x="631.5" y="4.5" width="13" height="12"/>
  <rect x="634.5" y="6.5" width="7" height="8"/>
  <path d="M636 8.5 h4 M636 10.5 h4 M636 12.5 h4"/>
  <rect x="669.5" y="4.5" width="13" height="12"/>
  <path d="M673.5 4.5 v6.5 M677.5 4.5 v6.5 M669.5 11.5 h8"/>
 </g>
 <rect x="700" y="10" width="6" height="1.6" fill="#555"/>
 <rect x="710" y="10" width="100" height="1" fill="#999"/>
 <rect x="758" y="5" width="4" height="11" fill="#666"/>
 <path d="M814 10.5 h8 M818 6.5 v8" stroke="#555" stroke-width="1.8"/>
</svg>
<div class="a" style="left:837px;top:759px;font-size:11.2px;color:#444">100%</div>
<!-- ===== cell data ===== -->
<div class="a" style="left:30px;top:223px;width:320px;height:20px;background:#ffff00"></div>
<div class="cell b" style="left:32px;top:223px">China</div>
<div class="cell b" style="left:96px;top:223px">England</div>
<div class="cell b" style="left:160px;top:223px">USA</div>
<div class="cell b" style="left:224px;top:223px">Canada</div>
<div class="cell b" style="left:288px;top:223px">Color</div>
<div class="cell" style="left:32px;top:243px">Pink</div>
<div class="cell" style="left:96px;top:243px">Pink</div>
<div class="cell" style="left:160px;top:243px">Green</div>
<div class="cell" style="left:224px;top:243px">Green</div>
<div class="cell" style="left:286px;top:243px;width:63px;text-align:right;padding-right:2px">0</div>
<div class="cell" style="left:32px;top:263px">Red</div>
<div class="cell" style="left:96px;top:263px">Green</div>
<div class="cell" style="left:160px;top:263px">Red</div>
<div class="cell" style="left:224px;top:263px">Pink</div>
<div class="cell" style="left:286px;top:263px;width:63px;text-align:right;padding-right:2px">3</div>
<div class="cell" style="left:32px;top:283px">Blue</div>
<div class="cell" style="left:96px;top:283px">Blue</div>
<div class="cell" style="left:160px;top:283px">Blue</div>
<div class="cell" style="left:224px;top:283px">Blue</div>
<div class="cell" style="left:286px;top:283px;width:63px;text-align:right;padding-right:2px">2</div>
<div class="cell" style="left:32px;top:303px">Green</div>
<div class="cell" style="left:96px;top:303px">Green</div>
<div class="cell" style="left:160px;top:303px">Red</div>
<div class="cell" style="left:224px;top:303px">Blue</div>
<div class="cell" style="left:286px;top:303px;width:63px;text-align:right;padding-right:2px">1</div>
<div class="cell" style="left:32px;top:323px">Green</div>
<div class="cell" style="left:96px;top:323px">Green</div>
<div class="cell" style="left:160px;top:323px">Blue</div>
<div class="cell" style="left:224px;top:323px">Green</div>
<div class="cell" style="left:286px;top:323px;width:63px;text-align:right;padding-right:2px">3</div>
<div class="cell" style="left:32px;top:343px">Pink</div>
<div class="cell" style="left:96px;top:343px">Green</div>
<div class="cell" style="left:160px;top:343px">Pink</div>
<div class="cell" style="left:224px;top:343px">Blue</div>
<div class="cell" style="left:286px;top:343px;width:63px;text-align:right;padding-right:2px">2</div>
<div class="cell" style="left:32px;top:363px">Blue</div>
<div class="cell" style="left:96px;top:363px">Red</div>
<div class="cell" style="left:160px;top:363px">Blue</div>
<div class="cell" style="left:224px;top:363px">Green</div>
<div class="cell" style="left:286px;top:363px;width:63px;text-align:right;padding-right:2px">1</div>
<div class="cell" style="left:32px;top:383px">Blue</div>
<div class="cell" style="left:96px;top:383px">Red</div>
<div class="cell" style="left:160px;top:383px">Red</div>
<div class="cell" style="left:224px;top:383px">Green</div>
<div class="cell" style="left:286px;top:383px;width:63px;text-align:right;padding-right:2px">1</div>
<div class="cell" style="left:32px;top:403px">Green</div>
<div class="cell" style="left:96px;top:403px">Blue</div>
<div class="cell" style="left:160px;top:403px">Blue</div>
<div class="cell" style="left:224px;top:403px">Pink</div>
<div class="cell" style="left:286px;top:403px;width:63px;text-align:right;padding-right:2px">0</div>
<svg class="a" style="left:0;top:0" width="888" height="777">
 <rect x="29" y="222" width="65" height="21" fill="none" stroke="#217346" stroke-width="2"/>
 <rect x="90" y="239" width="7" height="7" fill="#fff"/>
 <rect x="91" y="240" width="5" height="5" fill="#217346"/>
</svg>
<!-- ===== slicer ===== -->
<div class="a" style="left:93px;top:442px;width:190px;height:264px;background:#fff;border:1px solid #7f9fc3"></div>
<div class="cell b" style="left:102px;top:446px">China</div>
<div class="a" style="left:102px;top:469px;width:172px;height:1px;background:#6f93bb"></div>
<svg class="a" style="left:220px;top:444px" width="56" height="22">
 <g stroke="#666" stroke-width="1.3" fill="none">
  <path d="M4.5 5 l2 2 l3.5 -4 M4.5 10 l2 2 l3.5 -4 M4.5 15 l2 2 l3.5 -4"/>
 </g>
 <g fill="#666"><rect x="11.5" y="5" width="8.5" height="1.2"/><rect x="11.5" y="10" width="8.5" height="1.2"/><rect x="11.5" y="15" width="8.5" height="1.2"/></g>
 <path d="M35.5 4 h11.5 l-4.5 5 v5 l-2 0 v-5z" fill="#a6a6a6"/>
 <path d="M42 12 l8 7 M50 12 l-8 7" stroke="#a6a6a6" stroke-width="1.3"/>
</svg>

<div class="a" style="left:102px;top:474px;width:172px;height:25px;background:#bdd7ee;border:1px solid #9aa3ad;border-radius:3px"></div>
<div class="cell" style="left:111px;top:476px">Pink</div>
<div class="a" style="left:102px;top:502px;width:172px;height:25px;background:#bdd7ee;border:1px solid #9aa3ad;border-radius:3px"></div>
<div class="cell" style="left:111px;top:504px">Red</div>
<div class="a" style="left:102px;top:530px;width:172px;height:25px;background:#bdd7ee;border:1px solid #9aa3ad;border-radius:3px"></div>
<div class="cell" style="left:111px;top:532px">Blue</div>
<div class="a" style="left:102px;top:558px;width:172px;height:25px;background:#bdd7ee;border:1px solid #9aa3ad;border-radius:3px"></div>
<div class="cell" style="left:111px;top:560px">Green</div>
<!-- ===== pivot ===== -->
<div class="a" style="left:414px;top:443px;width:205px;height:19px;background:#dce6f1;border-bottom:1px solid #95b3d7"></div>
<div class="a" style="left:414px;top:482px;width:396px;height:41px;background:#dce6f1;border-bottom:1px solid #95b3d7"></div>
<div class="a" style="left:414px;top:523px;width:396px;height:79px;background:#fff"></div>
<div class="a" style="left:414px;top:602px;width:396px;height:21px;background:#dce6f1;border-top:1px solid #95b3d7"></div>

<div class="a" style="left:602px;top:444px;width:17px;height:17px;background:#f4f6f9;border:1px solid #a6a6a6"></div>
<svg class="a" style="left:602px;top:444px" width="17" height="17"><path d="M4.5 7 h7.5 l-3.75 4z" fill="#555"/></svg>
<div class="a" style="left:602px;top:484px;width:17px;height:17px;background:#f4f6f9;border:1px solid #a6a6a6"></div>
<svg class="a" style="left:602px;top:484px" width="17" height="17"><path d="M4.5 7 h7.5 l-3.75 4z" fill="#555"/></svg>
<div class="a" style="left:488px;top:504px;width:17px;height:17px;background:#f4f6f9;border:1px solid #a6a6a6"></div>
<svg class="a" style="left:488px;top:504px" width="17" height="17"><path d="M4.5 7 h7.5 l-3.75 4z" fill="#555"/></svg>
<div class="cell" style="left:416px;top:443px">USA</div>
<div class="cell" style="left:508px;top:443px">(All)</div>
<div class="cell b" style="left:416px;top:483px">Sum of Color</div>
<div class="cell b" style="left:508px;top:483px">Column Labels</div>
<div class="cell b" style="left:416px;top:503px">Row Labels</div>
<div class="cell b" style="left:508px;top:503px">Blue</div>
<div class="cell b" style="left:621px;top:503px">Green</div>
<div class="cell b" style="left:667px;top:503px">Pink</div>
<div class="cell b" style="left:701px;top:503px">Red</div>
<div class="cell b" style="left:732px;top:503px">Grand Total</div>
<div class="cell" style="left:416px;top:523px">Blue</div>
<div class="cell" style="left:557px;top:523px;width:60px;text-align:right">2</div>
<div class="cell" style="left:603px;top:523px;width:60px;text-align:right">0</div>
<div class="cell" style="left:747px;top:523px;width:60px;text-align:right">2</div>
<div class="cell" style="left:416px;top:543px">Green</div>
<div class="cell" style="left:603px;top:543px;width:60px;text-align:right">4</div>
<div class="cell" style="left:637px;top:543px;width:60px;text-align:right">2</div>
<div class="cell" style="left:668px;top:543px;width:60px;text-align:right">3</div>
<div class="cell" style="left:747px;top:543px;width:60px;text-align:right">9</div>
<div class="cell" style="left:416px;top:563px">Pink</div>
<div class="cell" style="left:637px;top:563px;width:60px;text-align:right">0</div>
<div class="cell" style="left:747px;top:563px;width:60px;text-align:right">0</div>
<div class="cell" style="left:416px;top:583px">Red</div>
<div class="cell" style="left:557px;top:583px;width:60px;text-align:right">2</div>
<div class="cell" style="left:747px;top:583px;width:60px;text-align:right">2</div>
<div class="cell b" style="left:416px;top:603px">Grand Total</div>
<div class="cell b" style="left:557px;top:603px;width:60px;text-align:right">4</div>
<div class="cell b" style="left:603px;top:603px;width:60px;text-align:right">4</div>
<div class="cell b" style="left:637px;top:603px;width:60px;text-align:right">2</div>
<div class="cell b" style="left:668px;top:603px;width:60px;text-align:right">3</div>
<div class="cell b" style="left:747px;top:603px;width:60px;text-align:right">13</div>
</body></html>
